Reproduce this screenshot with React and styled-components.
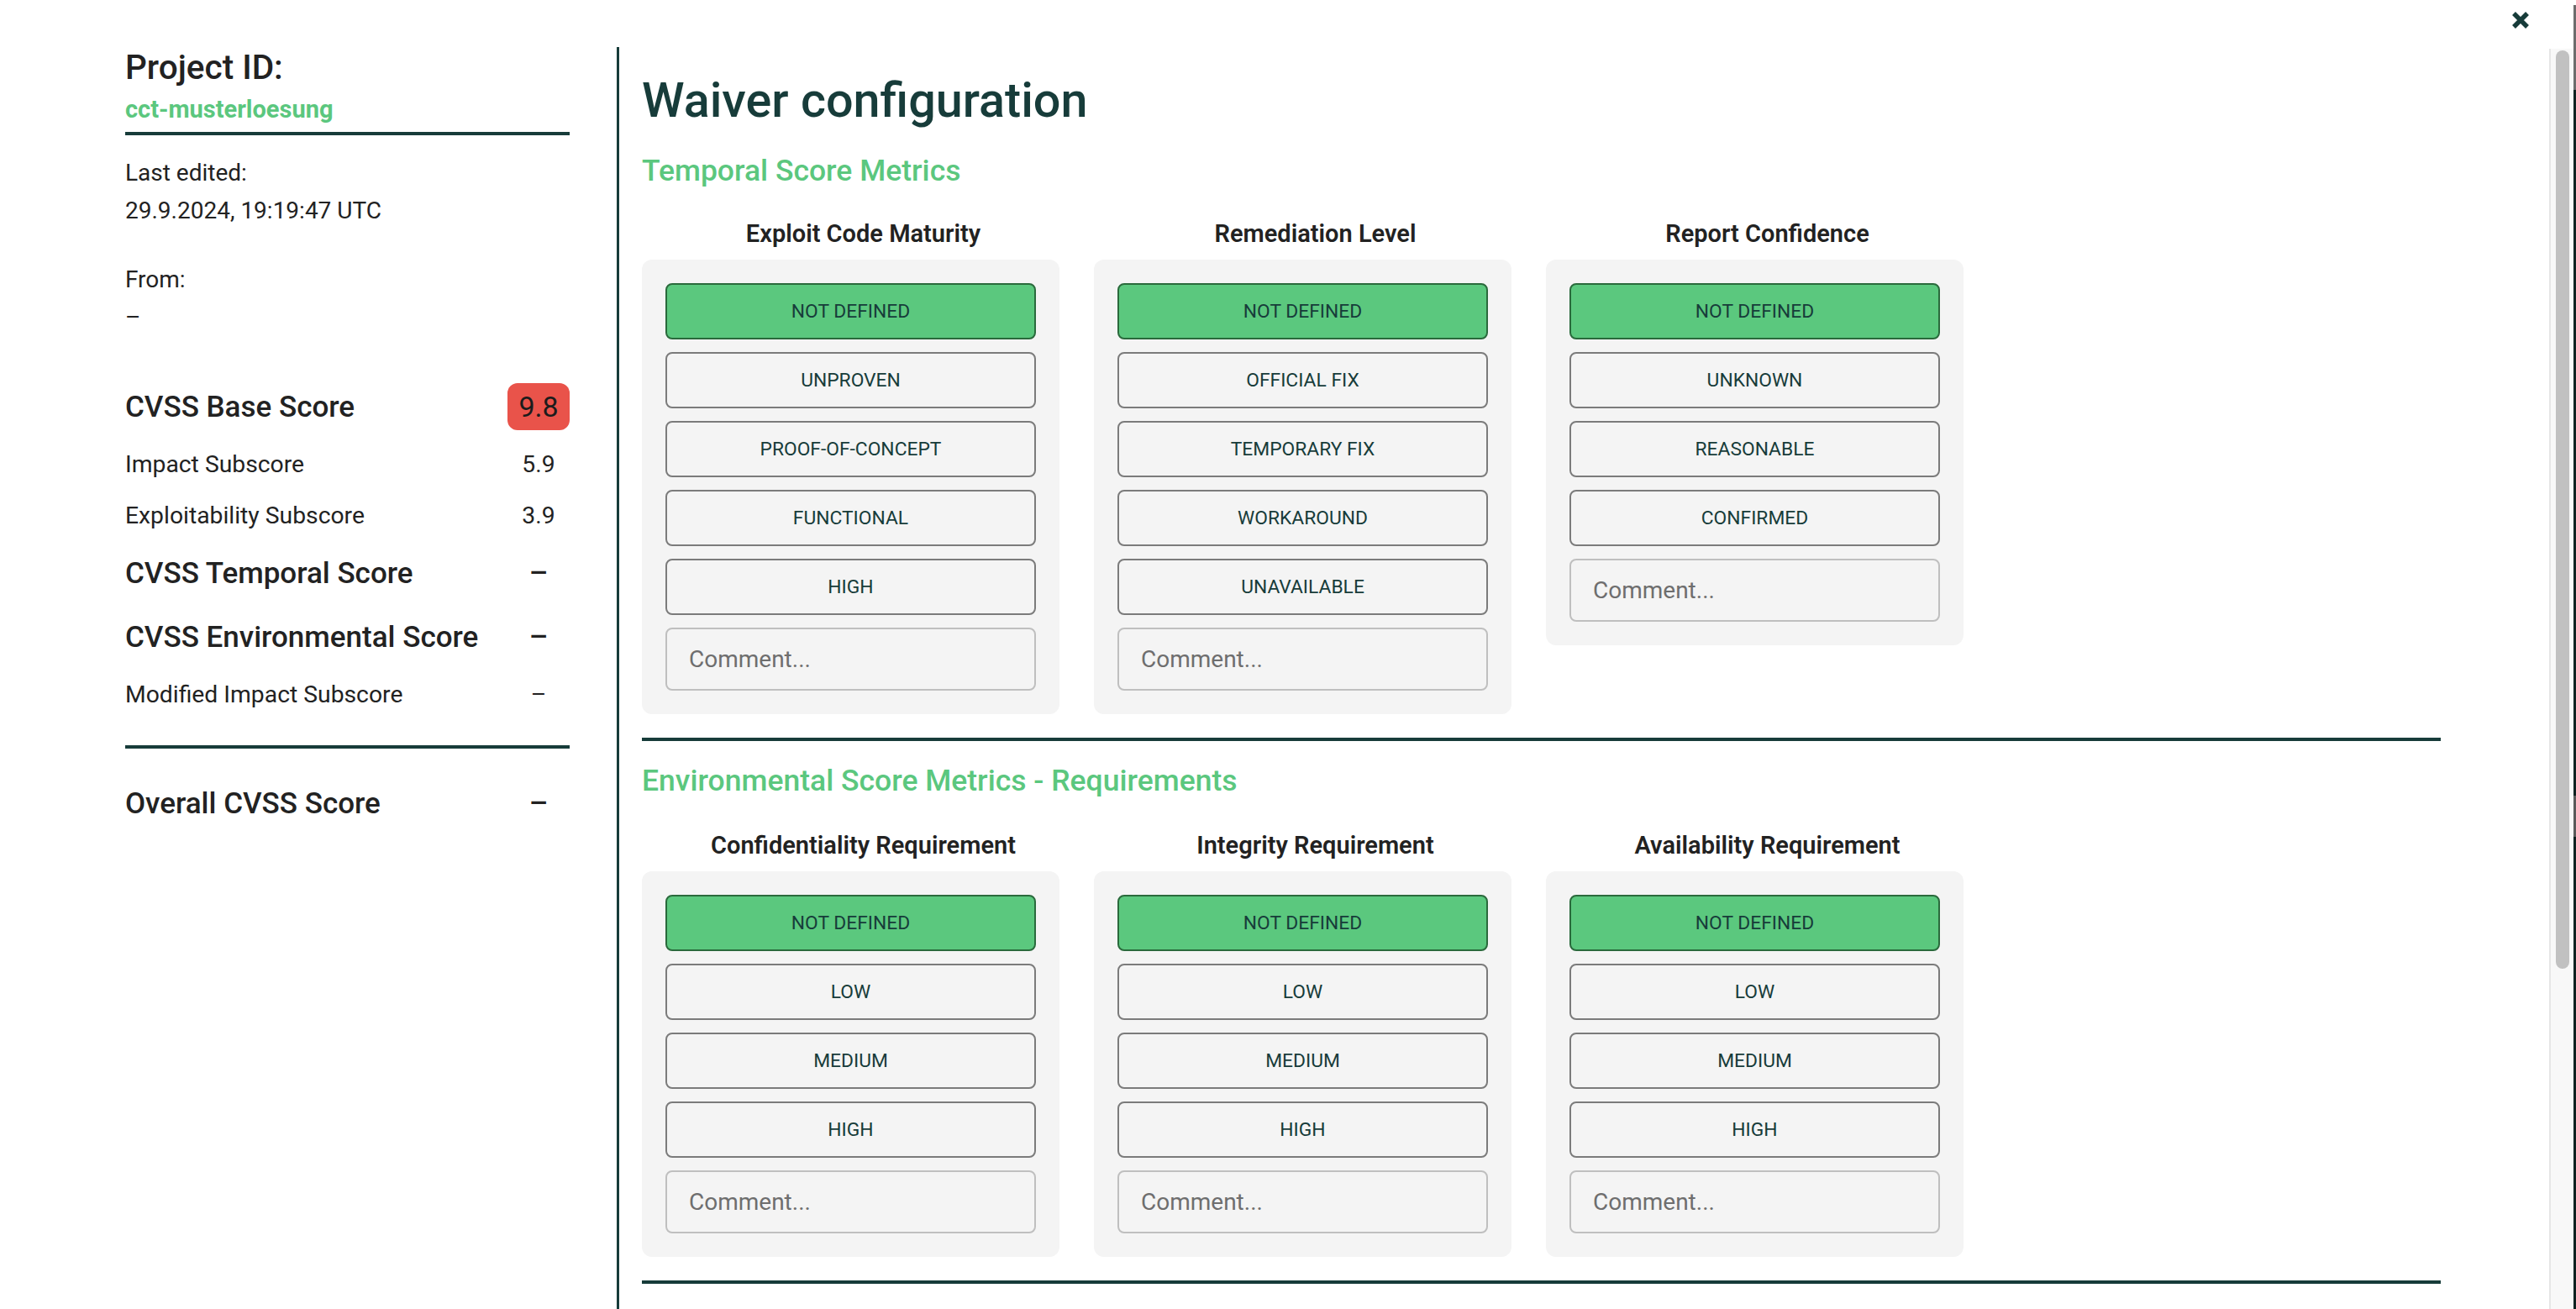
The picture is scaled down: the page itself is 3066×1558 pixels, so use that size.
import React from "react";
import styled, { createGlobalStyle } from "styled-components";

const GlobalStyles = createGlobalStyle`
  html, body {
    margin: 0;
    padding: 0;
    height: 100%;
    overflow: hidden;
  }
  body {
    font-family: Roboto, "Liberation Sans", sans-serif;
    background: #fff;
    color: #222;
  }
  #root {
    height: 100%;
  }
  * {
    box-sizing: border-box;
  }
`;

const temporal = [
  {
    title: "Exploit Code Maturity",
    options: ["Not Defined", "Unproven", "Proof-of-Concept", "Functional", "High"],
  },
  {
    title: "Remediation Level",
    options: ["Not Defined", "Official Fix", "Temporary Fix", "Workaround", "Unavailable"],
  },
  {
    title: "Report Confidence",
    options: ["Not Defined", "Unknown", "Reasonable", "Confirmed"],
  },
];

const requirements = [
  { title: "Confidentiality Requirement", options: ["Not Defined", "Low", "Medium", "High"] },
  { title: "Integrity Requirement", options: ["Not Defined", "Low", "Medium", "High"] },
  { title: "Availability Requirement", options: ["Not Defined", "Low", "Medium", "High"] },
];

const App = () => {
  return (
    <>
      <GlobalStyles />
      <Page>
        <Modal>
          <TopBar>
            <CloseButton aria-label="Close">
              <svg width="20" height="20" viewBox="0 0 20 20">
                <path d="M2 2 L18 18 M18 2 L2 18" stroke="#173c3a" strokeWidth="5.5" />
              </svg>
            </CloseButton>
          </TopBar>
          <BodyRow>
            <Body>
              <Sidebar>
                <ProjectHeader>
                  <ProjectLabel>Project ID:</ProjectLabel>
                  <ProjectId>cct-musterloesung</ProjectId>
                </ProjectHeader>
                <MetaBlock>
                  <MetaLine>Last edited:</MetaLine>
                  <MetaLine>29.9.2024, 19:19:47 UTC</MetaLine>
                </MetaBlock>
                <MetaBlock $gap={37}>
                  <MetaLine>From:</MetaLine>
                  <MetaLine>–</MetaLine>
                </MetaBlock>
                <ScoreList>
                  <ScoreRow $big>
                    <span>CVSS Base Score</span>
                    <Badge>9.8</Badge>
                  </ScoreRow>
                  <ScoreRow>
                    <span>Impact Subscore</span>
                    <ScoreValue>5.9</ScoreValue>
                  </ScoreRow>
                  <ScoreRow>
                    <span>Exploitability Subscore</span>
                    <ScoreValue>3.9</ScoreValue>
                  </ScoreRow>
                  <ScoreRow $big>
                    <span>CVSS Temporal Score</span>
                    <ScoreValue>–</ScoreValue>
                  </ScoreRow>
                  <ScoreRow $big>
                    <span>CVSS Environmental Score</span>
                    <ScoreValue>–</ScoreValue>
                  </ScoreRow>
                  <ScoreRow>
                    <span>Modified Impact Subscore</span>
                    <ScoreValue>–</ScoreValue>
                  </ScoreRow>
                </ScoreList>
                <SideRule />
                <ScoreRow $big>
                  <span>Overall CVSS Score</span>
                  <ScoreValue>–</ScoreValue>
                </ScoreRow>
              </Sidebar>

              <Main>
                <Title>Waiver configuration</Title>
                <SectionTitle $top={29}>Temporal Score Metrics</SectionTitle>
                <MetricGrid>
                  {temporal.map((m) => (
                    <Metric key={m.title} {...m} />
                  ))}
                </MetricGrid>
                <Divider />
                <SectionTitle>Environmental Score Metrics - Requirements</SectionTitle>
                <MetricGrid $top={39}>
                  {requirements.map((m) => (
                    <Metric key={m.title} {...m} />
                  ))}
                </MetricGrid>
                <Divider />
              </Main>
            </Body>
            <ScrollTrack>
              <ScrollThumb />
            </ScrollTrack>
          </BodyRow>
        </Modal>
        <EdgeStrip />
      </Page>
    </>
  );
};

const Metric = ({ title, options }) => (
  <MetricColumn>
    <MetricTitle>{title}</MetricTitle>
    <Card>
      {options.map((o, i) => (
        <OptionButton key={o} $selected={i === 0}>
          {o}
        </OptionButton>
      ))}
      <CommentInput placeholder="Comment..." />
    </Card>
  </MetricColumn>
);

const Page = styled.div`
  display: flex;
  height: 100vh;
  width: 100vw;
`;

const Modal = styled.div`
  flex: 1;
  display: flex;
  flex-direction: column;
  min-width: 0;
  background: #fff;
`;

const EdgeStrip = styled.div`
  width: 3px;
  flex-shrink: 0;
  background: linear-gradient(
    to bottom,
    #fff 0 6px,
    #6c6c6c 6px 107px,
    #0e2120 107px 947px,
    #5a5a5a 947px 996px,
    #0e2120 996px
  );
`;

const TopBar = styled.div`
  height: 56px;
  flex-shrink: 0;
  display: flex;
  justify-content: flex-end;
  align-items: flex-start;
  padding: 14px 53px 0 0;
`;

const CloseButton = styled.button`
  display: flex;
  padding: 0;
  border: none;
  background: none;
  cursor: pointer;
`;

const BodyRow = styled.div`
  flex: 1;
  min-height: 0;
  display: flex;
`;

const Body = styled.div`
  flex: 1;
  min-width: 0;
  display: flex;
  overflow: hidden;
`;

const ScrollTrack = styled.div`
  width: 29px;
  flex-shrink: 0;
  margin-top: 2px;
  padding: 2px 5px 0 6px;
  background: #f8f8f8;
  border-left: 2px solid #e6e6e6;
`;

const ScrollThumb = styled.div`
  height: 1093px;
  border-radius: 8px;
  background: #c1c1c1;
`;

const Sidebar = styled.aside`
  width: 737px;
  flex-shrink: 0;
  padding: 0 56px 0 149px;
  border-right: 3px solid #173c3a;
`;

const ProjectHeader = styled.div`
  padding-bottom: 7px;
  border-bottom: 4px solid #173c3a;
`;

const ProjectLabel = styled.h2`
  margin: 0;
  font-size: 40.5px;
  font-weight: 500;
  line-height: 48px;
  color: #222;
`;

const ProjectId = styled.div`
  margin-top: 6px;
  font-size: 29px;
  font-weight: 700;
  line-height: 40px;
  color: #5bc77e;
`;

const MetaBlock = styled.div`
  margin-top: ${(p) => p.$gap || 22}px;
`;

const MetaLine = styled.div`
  font-size: 28px;
  line-height: 45px;
  color: #222;
`;

const ScoreList = styled.div`
  margin-top: 46px;
`;

const ScoreRow = styled.div`
  display: flex;
  align-items: center;
  justify-content: space-between;
  height: ${(p) => (p.$big ? 76 : 61)}px;
  font-size: ${(p) => (p.$big ? 35 : 28.3)}px;
  font-weight: ${(p) => (p.$big ? 500 : 400)};
  color: #222;
`;

const ScoreValue = styled.span`
  width: 74px;
  text-align: center;
`;

const Badge = styled.span`
  width: 74px;
  height: 56px;
  display: flex;
  align-items: center;
  justify-content: center;
  background: #e9534a;
  border-radius: 12px;
  font-size: 34px;
  font-weight: 400;
  color: #1c1c1c;
`;

const SideRule = styled.hr`
  margin: 30px 0 27px;
  border: none;
  height: 4px;
  background: #173c3a;
`;

const Main = styled.main`
  flex: 1;
  min-width: 0;
  padding: 30px 129px 0 27px;
`;

const Title = styled.h1`
  margin: 0;
  font-size: 57.5px;
  font-weight: 500;
  line-height: 67px;
  color: #173c3a;
`;

const SectionTitle = styled.h3`
  margin: ${(p) => p.$top || 0}px 0 0;
  font-size: 35.5px;
  font-weight: 500;
  line-height: 42px;
  color: #5bc77e;
`;

const MetricGrid = styled.div`
  display: grid;
  grid-template-columns: repeat(3, 497px);
  column-gap: 41px;
  align-items: start;
  margin-top: ${(p) => p.$top || 37}px;
`;

const MetricColumn = styled.div`
  display: flex;
  flex-direction: column;
`;

const MetricTitle = styled.h4`
  margin: 0 0 14px;
  padding-left: 30px;
  font-size: 29px;
  font-weight: 600;
  line-height: 34px;
  text-align: center;
  color: #222;
`;

const Card = styled.div`
  display: flex;
  flex-direction: column;
  gap: 15px;
  padding: 28px;
  background: #f4f4f4;
  border-radius: 12px;
`;

const OptionButton = styled.button`
  height: 67px;
  border: 2px solid ${(p) => (p.$selected ? "#2a6a3c" : "#7b7b7b")};
  border-radius: 8px;
  background: ${(p) => (p.$selected ? "#5bc87e" : "transparent")};
  font-family: inherit;
  font-size: 22.8px;
  color: #173c3a;
  text-transform: uppercase;
  cursor: pointer;
`;

const CommentInput = styled.input`
  height: 75px;
  padding: 0 26px;
  border: 2px solid #bfbfbf;
  border-radius: 8px;
  background: #f4f4f4;
  font-family: inherit;
  font-size: 28px;
  color: #222;
  outline: none;

  &::placeholder {
    color: #6e6e6e;
  }
`;

const Divider = styled.hr`
  margin: 28px 0 26px;
  border: none;
  height: 4px;
  background: #173c3a;
`;

export default App;
